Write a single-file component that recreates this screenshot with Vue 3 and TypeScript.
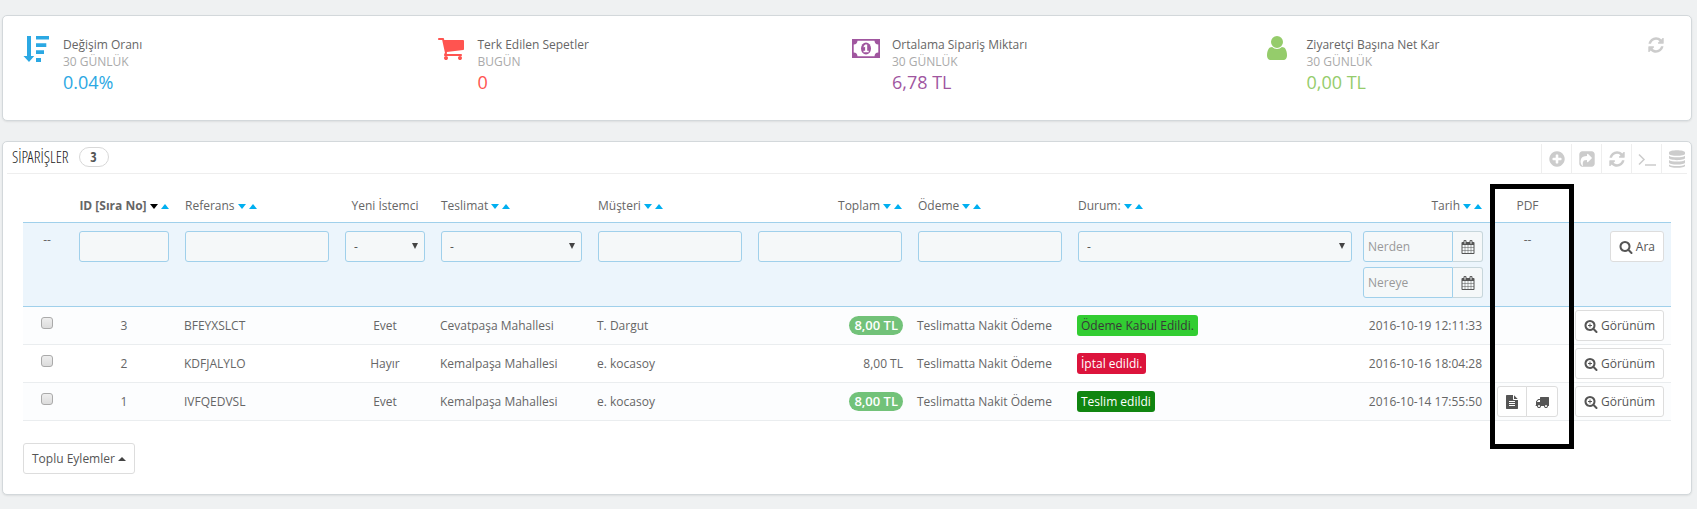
<script setup lang="ts">
import { ref } from 'vue'

interface Kpi { key: string; label: string; period: string; value: string }
interface Column { key: string; label: string; align: string; sortable: boolean; filter: string; active?: boolean }
interface Order {
  id: number; reference: string; isNew: string; delivery: string; customer: string
  total: string; paid: boolean; payment: string; status: string; statusKey: string
  date: string; documents: boolean
}

const icons = {
  refresh: 'M1639 1056q0 5-1 7-64 268-268 434.5t-478 166.5q-146 0-282.5-55t-243.5-157l-129 129q-19 19-45 19t-45-19-19-45v-448q0-26 19-45t45-19h448q26 0 45 19t19 45-19 45l-137 137q71 66 161 102t187 36q134 0 250-65t186-179q11-17 53-117 8-23 30-23h192q13 0 22.5 9.5t9.5 22.5zm25-800v448q0 26-19 45t-45 19h-448q-26 0-45-19t-19-45 19-45l138-138q-148-137-349-137-134 0-250 65t-186 179q-11 17-53 117-8 23-30 23h-199q-13 0-22.5-9.5t-9.5-22.5v-7q65-268 270-434.5t480-166.5q146 0 284 55.5t245 156.5l130-129q19-19 45-19t45 19 19 45z',
  add: 'M1344 960v-128q0-26-19-45t-45-19h-256v-256q0-26-19-45t-45-19h-128q-26 0-45 19t-19 45v256h-256q-26 0-45 19t-19 45v128q0 26 19 45t45 19h256v256q0 26 19 45t45 19h128q26 0 45-19t19-45v-256h256q26 0 45-19t19-45zm320-64q0 209-103 385.5t-279.5 279.5-385.5 103-385.5-103-279.5-279.5-103-385.5 103-385.5 279.5-279.5 385.5-103 385.5 103 279.5 279.5 103 385.5z',
  share: 'M1005 1197l352-352q19-19 19-45t-19-45l-352-352q-30-31-69-14-40 17-40 59v160q-119 0-216 19.5t-162.5 51-114 79-76.5 95.5-44.5 109-21.5 111.5-5 110.5q0 181 167 404 11 12 25 12 7 0 13-3 22-9 19-33-44-354 62-473 46-52 130-75.5t224-23.5v160q0 42 40 59 12 5 24 5 26 0 45-19zm659-781v960q0 119-84.5 203.5t-203.5 84.5h-960q-119 0-203.5-84.5t-84.5-203.5v-960q0-119 84.5-203.5t203.5-84.5h960q119 0 203.5 84.5t84.5 203.5z',
  cart: 'M704 1536q0 52-38 90t-90 38-90-38-38-90 38-90 90-38 90 38 38 90zm896 0q0 52-38 90t-90 38-90-38-38-90 38-90 90-38 90 38 38 90zm128-1088v512q0 24-16.5 42.5t-40.5 21.5l-1044 122q13 60 13 70 0 16-24 64h920q26 0 45 19t19 45-19 45-45 19h-1024q-26 0-45-19t-19-45q0-11 8-31.5t16-36 21.5-40 15.5-29.5l-177-823h-204q-26 0-45-19t-19-45 19-45 45-19h256q16 0 28.5 6.5t19.5 15.5 13 24.5 8 26 5.5 29.5 4.5 26h1201q26 0 45 19t19 45z',
  user: 'M1536 1399q0 109-62.5 187t-150.5 78h-854q-88 0-150.5-78t-62.5-187q0-85 8.5-160.5t31.5-152 58.5-131 94-89 134.5-34.5q131 128 313 128t313-128q76 0 134.5 34.5t94 89 58.5 131 31.5 152 8.5 160.5zm-256-887q0 159-112.5 271.5t-271.5 112.5-271.5-112.5-112.5-271.5 112.5-271.5 271.5-112.5 271.5 112.5 112.5 271.5z',
  calendar: 'M192 1664h288v-288h-288v288zm352 0h320v-288h-320v288zm-352-352h288v-320h-288v320zm352 0h320v-320h-320v320zm-352-384h288v-288h-288v288zm736 736h320v-288h-320v288zm-384-736h320v-288h-320v288zm768 736h288v-288h-288v288zm-384-352h320v-320h-320v320zm-352-864v-288q0-13-9.5-22.5t-22.5-9.5h-64q-13 0-22.5 9.5t-9.5 22.5v288q0 13 9.5 22.5t22.5 9.5h64q13 0 22.5-9.5t9.5-22.5zm736 864h288v-320h-288v320zm-384-384h320v-288h-320v288zm384 0h288v-288h-288v288zm32-480v-288q0-13-9.5-22.5t-22.5-9.5h-64q-13 0-22.5 9.5t-9.5 22.5v288q0 13 9.5 22.5t22.5 9.5h64q13 0 22.5-9.5t9.5-22.5zm384-64v1280q0 52-38 90t-90 38h-1408q-52 0-90-38t-38-90v-1280q0-52 38-90t90-38h128v-96q0-66 47-113t113-47h64q66 0 113 47t47 113v96h384v-96q0-66 47-113t113-47h64q66 0 113 47t47 113v96h128q52 0 90 38t38 90z',
  search: 'M1216 832q0-185-131.5-316.5t-316.5-131.5-316.5 131.5-131.5 316.5 131.5 316.5 316.5 131.5 316.5-131.5 131.5-316.5zm512 832q0 52-38 90t-90 38q-54 0-90-38l-343-342q-179 124-399 124-143 0-273.5-55.5t-225-150-150-225-55.5-273.5 55.5-273.5 150-225 225-150 273.5-55.5 273.5 55.5 225 150 150 225 55.5 273.5q0 220-124 399l343 343q37 37 37 90z',
  file: 'M1596 476q14 14 28 36h-472v-472q22 14 36 28zm-476 164h544v1056q0 40-28 68t-68 28h-1344q-40 0-68-28t-28-68v-1600q0-40 28-68t68-28h800v544q0 40 28 68t68 28zm160 736v-64q0-14-9-23t-23-9h-704q-14 0-23 9t-9 23v64q0 14 9 23t23 9h704q14 0 23-9t9-23zm0-256v-64q0-14-9-23t-23-9h-704q-14 0-23 9t-9 23v64q0 14 9 23t23 9h704q14 0 23-9t9-23zm0-256v-64q0-14-9-23t-23-9h-704q-14 0-23 9t-9 23v64q0 14 9 23t23 9h704q14 0 23-9t9-23z',
  truck: 'M640 1408q0-52-38-90t-90-38-90 38-38 90 38 90 90 38 90-38 38-90zm-384-512h384v-256h-158q-13 0-22 9l-195 195q-9 9-9 22v30zm1280 512q0-52-38-90t-90-38-90 38-38 90 38 90 90 38 90-38 38-90zm256-1088v1024q0 15-4 26.5t-13.5 18.5-16.5 11.5-23.5 6-22.5 2-25.5 0-22.5-.5q0 106-75 181t-181 75-181-75-75-181h-384q0 106-75 181t-181 75-181-75-75-181h-64q-3 0-22.5.5t-25.5 0-22.5-2-23.5-6-16.5-11.5-13.5-18.5-4-26.5q0-26 19-45t45-19v-320q0-8-.5-35t0-38 2.5-34.5 6.5-37 14-30.5 22.5-30l198-198q19-19 50.5-32t58.5-13h160v-192q0-26 19-45t45-19h1024q26 0 45 19t19 45z',
}

const kpis: Kpi[] = [
  { key: 'rate', label: 'Değişim Oranı', period: '30 GÜNLÜK', value: '0.04%' },
  { key: 'carts', label: 'Terk Edilen Sepetler', period: 'BUGÜN', value: '0' },
  { key: 'average', label: 'Ortalama Sipariş Miktarı', period: '30 GÜNLÜK', value: '6,78 TL' },
  { key: 'profit', label: 'Ziyaretçi Başına Net Kar', period: '30 GÜNLÜK', value: '0,00 TL' },
]

const columns: Column[] = [
  { key: 'id', label: 'ID [Sıra No]', align: 'center', sortable: true, filter: 'text', active: true },
  { key: 'reference', label: 'Referans', align: 'left', sortable: true, filter: 'text' },
  { key: 'new', label: 'Yeni İstemci', align: 'center', sortable: false, filter: 'select' },
  { key: 'delivery', label: 'Teslimat', align: 'left', sortable: true, filter: 'select' },
  { key: 'customer', label: 'Müşteri', align: 'left', sortable: true, filter: 'text' },
  { key: 'total', label: 'Toplam', align: 'right', sortable: true, filter: 'text' },
  { key: 'payment', label: 'Ödeme', align: 'left', sortable: true, filter: 'text' },
  { key: 'status', label: 'Durum:', align: 'left', sortable: true, filter: 'select' },
  { key: 'date', label: 'Tarih', align: 'right', sortable: true, filter: 'date' },
  { key: 'pdf', label: 'PDF', align: 'center', sortable: false, filter: 'none' },
]

const orders: Order[] = [
  { id: 3, reference: 'BFEYXSLCT', isNew: 'Evet', delivery: 'Cevatpaşa Mahallesi', customer: 'T. Dargut', total: '8,00 TL', paid: true, payment: 'Teslimatta Nakit Ödeme', status: 'Ödeme Kabul Edildi.', statusKey: 'accepted', date: '2016-10-19 12:11:33', documents: false },
  { id: 2, reference: 'KDFJALYLO', isNew: 'Hayır', delivery: 'Kemalpaşa Mahallesi', customer: 'e. kocasoy', total: '8,00 TL', paid: false, payment: 'Teslimatta Nakit Ödeme', status: 'İptal edildi.', statusKey: 'cancelled', date: '2016-10-16 18:04:28', documents: false },
  { id: 1, reference: 'IVFQEDVSL', isNew: 'Evet', delivery: 'Kemalpaşa Mahallesi', customer: 'e. kocasoy', total: '8,00 TL', paid: true, payment: 'Teslimatta Nakit Ödeme', status: 'Teslim edildi', statusKey: 'delivered', date: '2016-10-14 17:55:50', documents: true },
]

const selected = ref<number[]>([])
</script>

<template>
  <main class="page">
    <section class="panel kpi-panel">
      <div class="kpis">
        <article v-for="k in kpis" :key="k.key" class="kpi" :class="k.key">
          <div class="kpi-icon">
            <svg v-if="k.key === 'rate'" width="28" height="28" viewBox="0 0 28 28">
              <path d="M4 2h4v20h3.200l-5.200 6-5.500-6H4zM13 2h13v3.500H13zM13 9.300h10.300V13H13zM13 16.300h8V20h-8zM13 24h5v4h-5z" />
            </svg>
            <svg v-else-if="k.key === 'average'" width="28" height="28" viewBox="0 0 28 28">
              <path fill-rule="evenodd" d="M0 5h28v19H0zM5.500 6.700A4 4 0 0 1 1.700 10.500v8a4 4 0 0 1 3.800 3.800h17a4 4 0 0 1 3.800-3.800v-8A4 4 0 0 1 22.500 6.700z" />
              <ellipse cx="14" cy="14.500" rx="5" ry="6" />
              <path d="M13.300 10.500h1.900v6.200h1.500V18.200H11.500v-1.500h1.600v-3.900l-1.400.6v-1.500z" fill="#fff" />
            </svg>
            <svg v-else-if="k.key === 'carts'" width="28" height="28" viewBox="64 0 1792 1792"><path :d="icons.cart" /></svg>
            <svg v-else width="28" height="28" viewBox="256 0 1792 1792"><path :d="icons.user" /></svg>
          </div>
          <div>
            <div class="kpi-label">{{ k.label }}</div>
            <div class="kpi-period">{{ k.period }}</div>
            <div class="kpi-value">{{ k.value }}</div>
          </div>
        </article>
      </div>
      <button type="button" class="kpi-refresh" aria-label="Yenile">
        <svg width="18" height="18" viewBox="0 0 1792 1792"><path :d="icons.refresh" /></svg>
      </button>
    </section>

    <section class="panel orders">
      <header class="heading">
        <h1>SİPARİŞLER</h1>
        <span class="count">3</span>
        <nav class="tools">
          <a href="#" aria-label="Ekle"><svg width="18" height="18" viewBox="0 0 1792 1792"><path :d="icons.add" /></svg></a>
          <a href="#" aria-label="Dışa aktar"><svg width="18" height="18" viewBox="0 0 1792 1792"><path :d="icons.share" /></svg></a>
          <a href="#" aria-label="Yenile"><svg width="18" height="18" viewBox="0 0 1792 1792"><path :d="icons.refresh" /></svg></a>
          <a href="#" aria-label="SQL sorgusu">
            <svg width="18" height="18" viewBox="0 0 18 18" class="line"><path d="M1 4.500l5 5-5 5M7 14.900H18" /></svg>
          </a>
          <a href="#" aria-label="SQL yöneticisi">
            <svg width="18" height="18" viewBox="0 0 18 18">
              <path d="M1 2.500C1-.5 17-.5 17 2.500v1.300C17 6.500 1 6.500 1 3.800zM1 5.800c2 2 14 2 16 0v2.300c0 2.700-16 2.700-16 0zM1 10.100c2 2 14 2 16 0v2.300c0 2.700-16 2.700-16 0zM1 14.400c2 2 14 2 16 0v1.300c0 2.700-16 2.700-16 0z" />
            </svg>
          </a>
        </nav>
      </header>

      <div class="table-area">
        <table>
          <colgroup>
            <col class="w-check" />
            <col v-for="c in columns" :key="c.key" :class="'w-' + c.key" />
            <col class="w-actions" />
          </colgroup>
          <thead>
            <tr class="titles">
              <td></td>
              <th v-for="c in columns" :key="c.key" scope="col" :class="[c.align, { active: c.active, date: c.key === 'date' }]">
                <span class="title">
                  {{ c.label }}
                  <template v-if="c.sortable">
                    <a href="#" :aria-label="c.label + ' azalan'" class="sort down"></a>
                    <a href="#" :aria-label="c.label + ' artan'" class="sort up"></a>
                  </template>
                </span>
              </th>
              <td></td>
            </tr>
            <tr class="filters">
              <td class="center">--</td>
              <td v-for="c in columns" :key="c.key" :class="c.align">
                <input v-if="c.filter === 'text'" type="text" class="field" :aria-label="c.label" />
                <div v-else-if="c.filter === 'select'" class="select">
                  <select class="field" :aria-label="c.label"><option>-</option></select>
                </div>
                <div v-else-if="c.filter === 'date'" class="ranges">
                  <div v-for="p in ['Nerden', 'Nereye']" :key="p" class="range">
                    <input type="text" :placeholder="p" :aria-label="p" />
                    <span class="addon"><svg width="14" height="14" viewBox="0 0 1792 1792"><path :d="icons.calendar" /></svg></span>
                  </div>
                </div>
                <template v-else>--</template>
              </td>
              <td class="right actions">
                <button type="button" class="btn">
                  <svg width="14" height="14" viewBox="0 0 1792 1792"><path :d="icons.search" /></svg>Ara
                </button>
              </td>
            </tr>
          </thead>
          <tbody>
            <tr v-for="o in orders" :key="o.id">
              <td class="center"><input v-model="selected" type="checkbox" :value="o.id" :aria-label="'Sipariş ' + o.id" /></td>
              <td class="center">{{ o.id }}</td>
              <td>{{ o.reference }}</td>
              <td class="center">{{ o.isNew }}</td>
              <td>{{ o.delivery }}</td>
              <td>{{ o.customer }}</td>
              <td class="right"><span :class="{ badge: o.paid }">{{ o.total }}</span></td>
              <td>{{ o.payment }}</td>
              <td><span class="status" :class="o.statusKey">{{ o.status }}</span></td>
              <td class="right date">{{ o.date }}</td>
              <td class="center">
                <span v-if="o.documents" class="group">
                  <a href="#" class="btn" aria-label="Fatura"><svg width="12" height="14" viewBox="128 0 1536 1792"><path :d="icons.file" /></svg></a>
                  <a href="#" class="btn" aria-label="Teslimat fişi"><svg width="14" height="14" viewBox="0 0 1792 1792"><path :d="icons.truck" /></svg></a>
                </span>
              </td>
              <td class="right actions">
                <a href="#" class="btn">
                  <svg width="14" height="14" viewBox="0 0 1792 1792"><path :d="icons.search" /><path d="M704 576h128v192h192v128H832v192H704V896H512V768h192z" /></svg>Görünüm
                </a>
              </td>
            </tr>
          </tbody>
        </table>
        <div class="highlight"></div>
      </div>

      <button type="button" class="btn bulk">Toplu Eylemler <span class="caret"></span></button>
    </section>
  </main>
</template>

<style>
body {
  margin: 0;
  background: #eff1f2;
}
</style>

<style scoped>
* {
  box-sizing: border-box;
}
.page {
  padding: 15px 5px 14px 2px;
  display: flex;
  flex-direction: column;
  gap: 20px;
  font: 12px/16px "Open Sans", "Noto Sans", sans-serif;
  color: #666;
}
svg {
  fill: currentColor;
  display: block;
  flex: none;
}
a {
  color: inherit;
  text-decoration: none;
}
.panel {
  position: relative;
  background: #fff;
  border: 1px solid #d3d8db;
  border-radius: 5px;
  box-shadow: 0 1px 2px rgba(0, 0, 0, 0.08);
}
.kpi-panel {
  padding: 17px 10px 26px 20px;
}
.kpis {
  display: grid;
  grid-template-columns: repeat(4, 1fr);
}
.kpi {
  display: flex;
  gap: 12px;
}
.kpi-icon {
  padding-top: 1px;
}
.kpi > div:last-child {
  padding-top: 3px;
}
.kpi-label {
  line-height: 17px;
}
.kpi-period {
  line-height: 17px;
  color: #aaa;
}
.kpi-value {
  font-size: 18px;
  line-height: 24px;
}
.rate .kpi-icon, .rate .kpi-value { color: #2ba8e3; }
.carts .kpi-icon, .carts .kpi-value { color: #ff5450; }
.average .kpi-icon, .average .kpi-value { color: #a0569f; }
.profit .kpi-icon, .profit .kpi-value { color: #95cc6b; }
.kpi-refresh {
  position: absolute;
  top: 20px;
  right: 26px;
  padding: 0;
  border: 0;
  background: none;
  color: #ccc;
}
.heading {
  margin: 0 4px;
  padding-left: 5px;
  height: 32px;
  display: flex;
  align-items: center;
  border-bottom: 1px solid #eee;
  color: #555;
  font-family: "Open Sans Condensed", "Open Sans", sans-serif;
}
h1 {
  margin: 0 0 2px;
  color: #222;
  font-family: "Open Sans Condensed Light", "Open Sans Condensed", "Open Sans", sans-serif;
  font-size: 16px;
  font-weight: 300;
}
.count {
  margin: 0 0 2px 10px;
  width: 30px;
  height: 20px;
  border: 1px solid #d8d8d8;
  border-radius: 10px;
  text-align: center;
  font-size: 14px;
  line-height: 18px;
  font-weight: 700;
}
.tools {
  margin-left: auto;
  align-self: flex-end;
  display: flex;
  color: #ccc;
}
.tools a {
  width: 30px;
  height: 29px;
  display: flex;
  align-items: center;
  justify-content: center;
  border-left: 1px solid #eee;
}
.tools a:last-child {
  width: 26px;
  padding-right: 1px;
  justify-content: flex-end;
}
.line {
  fill: none;
  stroke: currentColor;
  stroke-width: 1.5;
}
.table-area {
  position: relative;
  margin: 0 20px;
  padding: 16px 0 22px;
}
table {
  width: 100%;
  table-layout: fixed;
  border-collapse: separate;
  border-spacing: 0;
}
.w-check { width: 48px; }
.w-id { width: 106px; }
.w-reference, .w-customer, .w-total, .w-payment { width: 160px; }
.w-new { width: 96px; }
.w-delivery { width: 157px; }
.w-date { width: 131px; }
.w-pdf { width: 73px; }
.w-actions { width: 107px; }
th, td {
  padding: 0 8px;
  text-align: left;
  white-space: nowrap;
}
th {
  font-weight: 400;
}
.center { text-align: center; }
.right { text-align: right; }
.active { font-weight: 700; }
.titles > * {
  padding-top: 8px;
  padding-bottom: 8px;
}
.title {
  display: inline-flex;
  align-items: center;
  gap: 3px;
}
.sort {
  border: 4px solid transparent;
  border-top: 5px solid #00aff0;
  border-bottom: 0;
}
.sort.up {
  border-top: 0;
  border-bottom: 5px solid #00aff0;
}
.active .sort.down {
  border-top-color: #000;
}
.filters td {
  padding-top: 8px;
  padding-bottom: 8px;
  vertical-align: top;
  line-height: 18px;
  background: #ecf5fc;
  border-top: 1px solid #a0d0eb;
  border-bottom: 1px solid #a0d0eb;
}
.field, .range input {
  display: block;
  width: 100%;
  height: 31px;
  margin: 0;
  padding: 0 8px;
  font: inherit;
  color: #555;
  background: #f5f8f9;
  border: 1px solid #a0d0eb;
  border-radius: 3px;
  appearance: none;
}
.select {
  position: relative;
}
.select::after {
  content: "";
  position: absolute;
  right: 7px;
  top: 12px;
  border: 3px solid transparent;
  border-top: 6px solid #444;
  border-bottom: 0;
}
.ranges {
  display: flex;
  flex-direction: column;
  gap: 5px;
  margin-left: -5px;
}
.range {
  display: flex;
}
.range input {
  flex: 1;
  min-width: 0;
  padding: 0 4px;
  border-radius: 3px 0 0 3px;
}
.range input::placeholder {
  color: #999;
}
.addon {
  width: 30px;
  display: flex;
  align-items: center;
  justify-content: center;
  color: #555;
  background: #f5f8f9;
  border: 1px solid #c7d6db;
  border-left: 0;
  border-radius: 0 3px 3px 0;
}
.btn {
  display: inline-flex;
  align-items: center;
  gap: 3px;
  height: 31px;
  padding: 0 8px;
  font: inherit;
  color: #555;
  background: #fff;
  border: 1px solid #ddd;
  border-radius: 3px;
  vertical-align: middle;
}
.group {
  display: flex;
  justify-content: center;
}
.group .btn:first-child {
  border-radius: 3px 0 0 3px;
}
.group .btn:last-child {
  margin-left: -1px;
  border-radius: 0 3px 3px 0;
}
tbody td {
  height: 38px;
  padding: 0 7px;
  border-bottom: 1px solid #eaedef;
}
th.date, td.date {
  padding-right: 9px;
}
td.actions {
  padding-right: 7px;
}
tbody tr:nth-child(odd) td {
  background: #fcfdfe;
}
input[type="checkbox"] {
  appearance: none;
  display: block;
  width: 12px;
  height: 12px;
  margin: 0 auto 5px;
  border: 1px solid #aaa;
  border-radius: 3px;
  background: linear-gradient(#eee, #dcdcdc);
}
.badge {
  display: inline-block;
  padding: 0 5px;
  font-size: 13px;
  line-height: 19px;
  border-radius: 10px;
  background: #72c279;
  color: #fff;
  font-weight: 600;
}
.status {
  display: inline-block;
  padding: 0 4px;
  line-height: 21px;
  border-radius: 3px;
  color: #fff;
}
.accepted { background: #32cd32; color: #383838; }
.cancelled { background: #dc143c; }
.delivered { background: #108510; }
.highlight {
  position: absolute;
  top: 10px;
  right: 97px;
  width: 84px;
  height: 265px;
  border: 5px solid #000;
  pointer-events: none;
}
.bulk {
  margin: 0 20px 20px;
  display: flex;
}
.caret {
  border: 4px solid transparent;
  border-bottom: 4px solid #444;
  border-top: 0;
}
</style>
